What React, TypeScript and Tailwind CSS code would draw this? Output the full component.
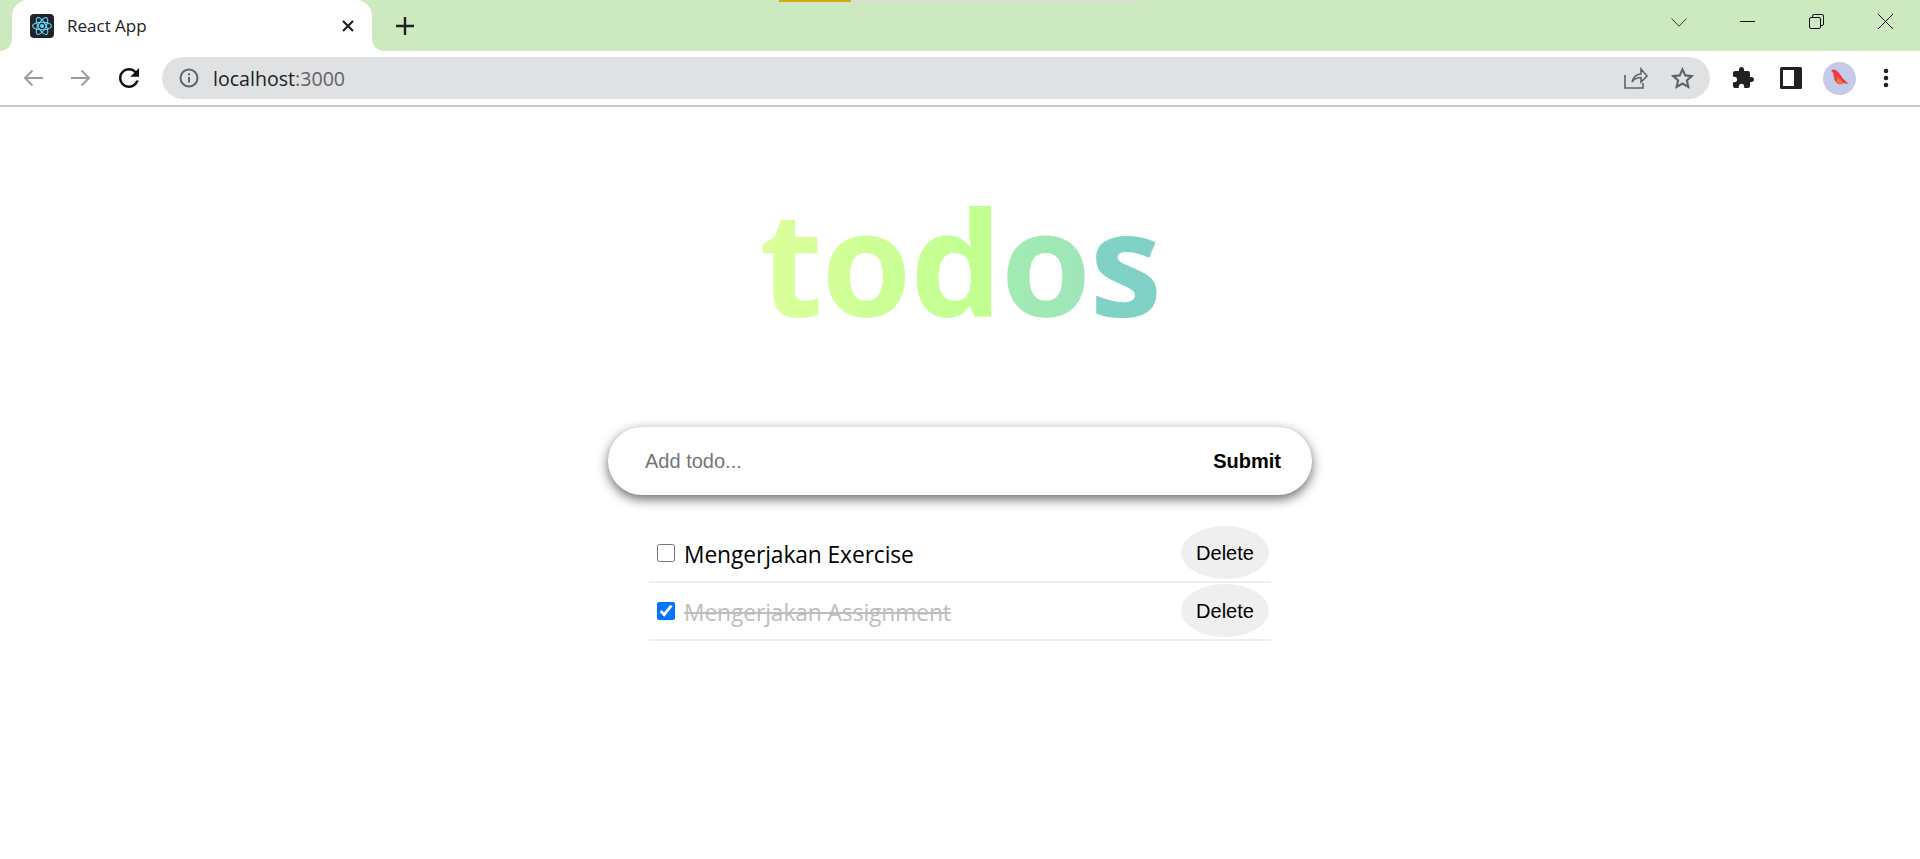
import React from "react";

const GREEN = "bg-[#cce9bf]";

function ReactIcon() {
  return (
    <svg width="24" height="24" viewBox="0 0 24 24" className="shrink-0">
      <rect width="24" height="24" rx="4" fill="#20232a" />
      <g fill="none" stroke="#61dafb" strokeWidth="1.1">
        <ellipse cx="12" cy="12" rx="9.5" ry="3.8" />
        <ellipse cx="12" cy="12" rx="9.5" ry="3.8" transform="rotate(60 12 12)" />
        <ellipse cx="12" cy="12" rx="9.5" ry="3.8" transform="rotate(120 12 12)" />
      </g>
      <circle cx="12" cy="12" r="2" fill="#61dafb" />
    </svg>
  );
}

function Arrow({ right }: { right?: boolean }) {
  return (
    <svg width="20" height="18" viewBox="0 0 20 18" className={right ? "rotate-180" : ""} fill="none" stroke="#9b9c9e" strokeWidth="2">
      <path d="M20 9H2M9.5 1.5 2 9l7.5 7.5" />
    </svg>
  );
}

function TodoRow({ label, done }: { label: string; done?: boolean }) {
  return (
    <li className="flex items-center h-[58px] pt-[1px] pb-[2px] pl-[8px] pr-[2px] border-b-2 border-[#eeeeee]">
      <input type="checkbox" readOnly checked={!!done} className="w-[18px] h-[18px] m-0 shrink-0" />
      <span
        className={
          "ml-[9px] pt-[5px] flex-1 font-['Open_Sans',sans-serif] text-[22.800px] tracking-[-0.1px] " +
          (done ? "line-through text-[#bdbdbd]" : "text-black")
        }
      >
        {label}
      </span>
      <button className="w-[88px] h-[53px] rounded-[50%] bg-[#efefef] text-[20px] text-black font-['Liberation_Sans',sans-serif]">
        Delete
      </button>
    </li>
  );
}

export default function App() {
  return (
    <div className="w-[1920px] h-[859px] overflow-hidden bg-white flex flex-col">
      {/* tab strip */}
      <div className={"relative flex h-[51px] shrink-0 " + GREEN}>
        <div className="absolute top-0 left-[779px] w-[72px] h-[2px] bg-[#d4a81a]" />
        <div className="absolute top-0 left-[851px] w-[290px] h-[2px] bg-[#dcdcdc]" />
        <div className="w-[12px] bg-white">
          <div className={"h-full rounded-br-[12px] " + GREEN} />
        </div>
        <div className="w-[360px] bg-white rounded-t-[16px] flex items-center pl-[18px] pr-[18px]">
          <ReactIcon />
          <span className="ml-[13px] flex-1 font-['Open_Sans',sans-serif] text-[17px] text-[#202124]">React App</span>
          <svg width="12" height="12" viewBox="0 0 12 12" stroke="#202124" strokeWidth="2.2" fill="none">
            <path d="M1 1l10 10M11 1 1 11" />
          </svg>
        </div>
        <div className="flex-1 bg-white">
          <div className={"h-full rounded-bl-[12px] flex items-center pl-[24px] pr-[27px] " + GREEN}>
            <svg width="18" height="18" viewBox="0 0 18 18" stroke="#202124" strokeWidth="2.4" fill="none">
              <path d="M9 0v18M0 9h18" />
            </svg>
            <svg width="16" height="9" viewBox="0 0 16 9" stroke="#3a3a3a" strokeWidth="1" fill="none" className="ml-auto -mt-[7px]">
              <path d="M.5.5 8 8.2 15.5.5" />
            </svg>
            <svg width="15" height="1" viewBox="0 0 15 1" stroke="#111" strokeWidth="1.4" fill="none" className="ml-[53px] -mt-[9px]">
              <path d="M0 .5h15" />
            </svg>
            <svg width="15" height="15" viewBox="0 0 15 15" stroke="#111" strokeWidth="1" fill="none" className="ml-[54px] -mt-[8px]">
              <rect x=".5" y="3.5" width="11" height="11" rx="1.5" />
              <path d="M3.5 3.5V2A1.5 1.5 0 0 1 5 .5h8A1.5 1.5 0 0 1 14.500 2v8a1.500 1.500 0 0 1-1.500 1.500h-1.500" />
            </svg>
            <svg width="15" height="15" viewBox="0 0 15 15" stroke="#111" strokeWidth="1" fill="none" className="ml-[54px] -mt-[8px]">
              <path d="M0 0l15 15M15 0 0 15" />
            </svg>
          </div>
        </div>
      </div>

      {/* toolbar */}
      <div className="h-[56px] shrink-0 border-b-2 border-[#c8c8c8] flex items-start pt-[6px] pl-[23px]">
        <div className="h-[42px] flex items-center gap-[28px]">
          <Arrow />
          <Arrow right />
          <svg width="30" height="30" viewBox="0 0 24 24" fill="#111" className="-ml-[5px] -mr-[5px]">
            <path d="M17.650 6.350C16.200 4.900 14.210 4 12 4c-4.420 0-7.990 3.580-7.990 8s3.570 8 7.990 8c3.730 0 6.840-2.550 7.730-6h-2.080c-.820 2.330-3.040 4-5.650 4-3.310 0-6-2.690-6-6s2.690-6 6-6c1.660 0 3.140.690 4.220 1.780L13 11h7V4l-2.350 2.350z" />
          </svg>
        </div>
        <div className="ml-[23px] w-[1548px] h-[42px] rounded-[21px] bg-[#e0e1e3] flex items-center pl-[17px] pr-[16px]">
          <svg width="20" height="20" viewBox="0 0 20 20" fill="none" stroke="#5f6368" strokeWidth="2">
            <circle cx="10" cy="10" r="8.500" />
            <path d="M10 9v5.500M10 5.200v2" />
          </svg>
          <span className="ml-[14px] pt-[2px] flex-1 font-['Open_Sans',sans-serif] text-[19.600px] text-[#202124]">
            localhost<span className="text-[#5f6368]">:3000</span>
          </span>
          <svg width="24" height="22" viewBox="0 0 24 22" fill="none" stroke="#5f6368" strokeWidth="1.600">
            <path d="M1 8v13h18v-5M8 15c1-5 5-8 9-8V2l6 7-6 6v-4.500c-4 0-7 1.500-9 4.500z" />
          </svg>
          <svg width="23" height="22" viewBox="0 0 24 23" fill="none" stroke="#5f6368" strokeWidth="2.200" className="ml-[23px]">
            <path d="m12 2.500 2.900 6.300 6.800.7-5.100 4.600 1.500 6.700-6.100-3.500-6.100 3.500 1.500-6.700-5.100-4.600 6.800-.7z" />
          </svg>
        </div>
        <div className="h-[42px] flex items-center">
          <svg width="24" height="24" viewBox="0 0 24 24" fill="#202124" className="ml-[21px]">
            <path d="M20.500 11H19V7c0-1.100-.9-2-2-2h-4V3.500C13 2.120 11.880 1 10.500 1S8 2.120 8 3.500V5H4c-1.100 0-1.990.9-1.990 2v3.800H3.500c1.490 0 2.700 1.210 2.700 2.700s-1.210 2.700-2.700 2.700H2V20c0 1.100.9 2 2 2h3.800v-1.500c0-1.490 1.210-2.700 2.700-2.700 1.490 0 2.700 1.210 2.700 2.700V22H17c1.100 0 2-.9 2-2v-4h1.500c1.380 0 2.500-1.120 2.500-2.500S21.880 11 20.500 11z" />
          </svg>
          <svg width="22" height="22" viewBox="0 0 22 22" className="ml-[25px]">
            <rect x="0" y="0" width="22" height="22" rx="1.500" fill="#202124" />
            <rect x="3" y="3" width="11" height="16" fill="#fff" />
          </svg>
          <svg width="33" height="33" viewBox="0 0 33 33" className="ml-[21px]">
            <circle cx="16.500" cy="16.500" r="16.500" fill="#c5cae9" />
            <path d="M8 9c1-1.500 3-2 4.500-1 2.500 1 5 4.500 7 8l6 6-5-1c-2 2-5 1.500-7-.5-2.500-2.500-3-6-3-9.500z" fill="#ef3b3f" />
            <path d="M14 15c2 1 4.500 3 6 6-2 1.500-4.500 1-6-1z" fill="#f9743a" />
          </svg>
          <svg width="6" height="20" viewBox="0 0 6 20" fill="#202124" className="ml-[27px]">
            <circle cx="3" cy="3" r="2.300" />
            <circle cx="3" cy="10" r="2.300" />
            <circle cx="3" cy="17" r="2.300" />
          </svg>
        </div>
      </div>

      {/* page */}
      <main className="flex flex-col items-center">
        <h1 className="mt-[58px] h-[192px] leading-[192px] text-[146px] font-bold tracking-[-1.600px] font-['Open_Sans',sans-serif] bg-[linear-gradient(90deg,#dcff9a_0%,#ccff96_30%,#bfff90_59%,#a2ebb2_61%,#9ee6b8_82%,#80d2c5_83.500%,#80d0c6_100%)] bg-clip-text text-transparent">
          todos
        </h1>
        <form className="mt-[70px] w-[704px] h-[68px] rounded-[34px] bg-white shadow-[0_4px_12px_rgba(0,0,0,0.6)] flex items-center pl-[37px] pr-[31px] font-['Liberation_Sans',sans-serif] text-[20px]">
          <input
            placeholder="Add todo..."
            className="flex-1 min-w-0 outline-none bg-transparent text-[20px] placeholder:text-[#757575]"
          />
          <button type="button" className="font-bold text-black text-[20px]">
            Submit
          </button>
        </form>
        <ul className="mt-[30px] w-[622px]">
          <TodoRow label="Mengerjakan Exercise" />
          <TodoRow label="Mengerjakan Assignment" done />
        </ul>
      </main>
    </div>
  );
}
